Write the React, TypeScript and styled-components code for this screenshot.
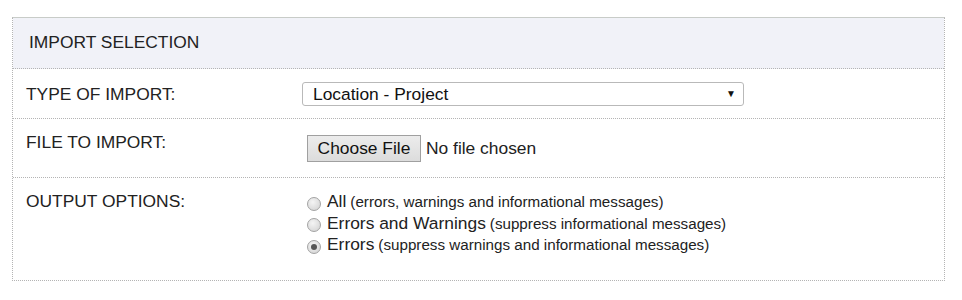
import React, { useState } from "react";
import styled, { createGlobalStyle } from "styled-components";

const GlobalStyle = createGlobalStyle`
  body {
    margin: 0;
    background: #ffffff;
    font-family: "Liberation Sans", Arial, sans-serif;
    color: #222;
  }
`;

const Page = styled.div`
  padding: 17px 0 0 12px;
`;

const Panel = styled.section`
  width: 933px;
  box-sizing: border-box;
  border-top: 1px solid #c8ccc8;
  border-left: 1px dotted #b4b4b4;
  border-right: 1px dotted #b4b4b4;
  border-bottom: 1px dotted #b4b4b4;
`;

const Header = styled.div`
  height: 51px;
  box-sizing: border-box;
  display: flex;
  align-items: center;
  padding: 0 0 2px 16px;
  background: #f1f2f8;
  border-bottom: 1px dotted #b4b4b4;
  font-size: 17.4px;
  color: #222;
`;

const Row = styled.div<{ $h: number; $last?: boolean }>`
  display: grid;
  grid-template-columns: 289px 1fr;
  height: ${(p) => p.$h}px;
  box-sizing: border-box;
  border-bottom: ${(p) => (p.$last ? "none" : "1px dotted #b4b4b4")};
`;

const Label = styled.div<{ $top: number }>`
  padding: ${(p) => p.$top}px 0 0 13px;
  font-size: 17.4px;
  line-height: 18px;
`;

const Value = styled.div<{ $top: number }>`
  padding-top: ${(p) => p.$top}px;
`;

const SelectWrap = styled.div`
  position: relative;
  width: 442px;
`;

const Select = styled.select`
  appearance: none;
  width: 442px;
  height: 24px;
  box-sizing: border-box;
  border: 1px solid #b9b9b9;
  border-radius: 3px;
  background: #fff;
  padding: 0 0 0 10px;
  font-family: "Liberation Sans", Arial, sans-serif;
  font-size: 17.4px;
  color: #111;
  outline: none;
`;

const Arrow = styled.span`
  position: absolute;
  right: 8px;
  top: 6px;
  font-size: 10px;
  line-height: 12px;
  color: #111;
  pointer-events: none;
`;

const FileLine = styled.div`
  display: flex;
  align-items: center;
  gap: 5px;
  padding-left: 5px;
  font-size: 17.4px;
`;

const FileButton = styled.button`
  height: 27px;
  width: 114px;
  box-sizing: border-box;
  border: 1px solid #a0a0a0;
  background: linear-gradient(#ececec, #dcdcdc);
  font-family: "Liberation Sans", Arial, sans-serif;
  font-size: 17.4px;
  color: #111;
  padding: 0;
`;

const RadioList = styled.div`
  display: flex;
  flex-direction: column;
  padding-left: 5px;
`;

const RadioLine = styled.label`
  display: flex;
  align-items: center;
  gap: 6px;
  height: 21.5px;
  font-size: 17.4px;
  color: #222;
  cursor: pointer;
`;

const Dot = styled.span<{ $on: boolean }>`
  width: 14px;
  height: 14px;
  flex: none;
  box-sizing: border-box;
  border-radius: 50%;
  border: 1px solid #a3a3a3;
  background: radial-gradient(circle at 40% 35%, #f4f4f4, #d0d0d0);
  display: flex;
  align-items: center;
  justify-content: center;
  margin-top: 4px;

  &::after {
    content: "";
    width: 6px;
    height: 6px;
    border-radius: 50%;
    background: #555;
    display: ${(p) => (p.$on ? "block" : "none")};
  }
`;

const Note = styled.span`
  font-size: 15.2px;
  margin-left: 4px;
`;

const options = [
  { name: "All", note: "(errors, warnings and informational messages)" },
  { name: "Errors and Warnings", note: "(suppress informational messages)" },
  { name: "Errors", note: "(suppress warnings and informational messages)" },
];

export default function App() {
  const [choice, setChoice] = useState(2);
  return (
    <>
      <GlobalStyle />
      <Page>
        <Panel>
          <Header>IMPORT SELECTION</Header>
          <Row $h={50}>
            <Label $top={16}>TYPE OF IMPORT:</Label>
            <Value $top={13}>
              <SelectWrap>
                <Select defaultValue="lp">
                  <option value="lp">Location - Project</option>
                </Select>
                <Arrow>▼</Arrow>
              </SelectWrap>
            </Value>
          </Row>
          <Row $h={59}>
            <Label $top={14}>FILE TO IMPORT:</Label>
            <Value $top={16}>
              <FileLine>
                <FileButton type="button">Choose File</FileButton>
                <span>No file chosen</span>
              </FileLine>
            </Value>
          </Row>
          <Row $h={102} $last>
            <Label $top={14}>OUTPUT OPTIONS:</Label>
            <Value $top={13}>
              <RadioList>
                {options.map((o, i) => (
                  <RadioLine key={o.name} onClick={() => setChoice(i)}>
                    <Dot $on={choice === i} />
                    <span>
                      {o.name}
                      <Note>{o.note}</Note>
                    </span>
                  </RadioLine>
                ))}
              </RadioList>
            </Value>
          </Row>
        </Panel>
      </Page>
    </>
  );
}
